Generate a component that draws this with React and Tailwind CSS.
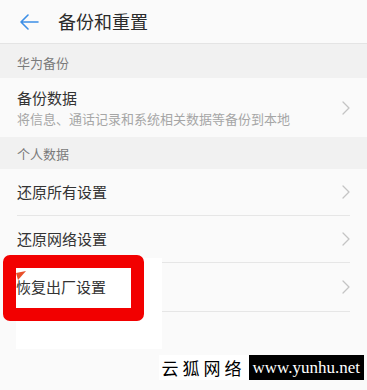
import React from "react";

const Chevron = () => (
  <svg width="8" height="14" viewBox="0 0 8 14" fill="none">
    <path d="M1 1 L7 7 L1 13" stroke="#c4c4c4" strokeWidth="1.3" strokeLinecap="round" strokeLinejoin="round" />
  </svg>
);

const SectionLabel = ({ children, h }) => (
  <div className={`${h} bg-[#f1f1f1] flex items-end px-[17px] pb-[6px] text-[13px] text-[#7a7a7a]`}>
    {children}
  </div>
);

const Row = ({ title, h, raised = false }) => (
  <div className={`${h} mx-[17px] flex items-center justify-between border-b border-[#e6e6e6]`}>
    <span className={`text-[15px] text-[#333] ${raised ? "relative z-10 -ml-[1px]" : ""}`}>{title}</span>
    <Chevron />
  </div>
);

const App = () => {
  return (
    <div
      className="relative w-full h-[390px] overflow-hidden bg-[#fafafa]"
      style={{ fontFamily: '"Noto Sans CJK SC", "Noto Sans", sans-serif' }}
    >
      <div className="h-[44px] flex items-center px-[19px] border-b border-[#e4e4e4] shadow-[0_1px_2px_rgba(0,0,0,0.06)]">
        <svg width="20" height="16" viewBox="0 0 20 16" fill="none">
          <path d="M19 8 H2 M9 1 L2 8 L9 15" stroke="#3d8fe6" strokeWidth="1.6" strokeLinecap="round" strokeLinejoin="round" />
        </svg>
        <span className="ml-[19px] text-[18px] text-[#2b2b2b]">备份和重置</span>
      </div>

      <SectionLabel h="h-[34px]">华为备份</SectionLabel>

      <div className="h-[59px] mx-[17px] flex items-center justify-between">
        <div className="flex flex-col">
          <span className="text-[15px] leading-[20px] text-[#333]">备份数据</span>
          <span className="mt-[2px] text-[13px] leading-[18px] text-[#a6a6a6]">将信息、通话记录和系统相关数据等备份到本地</span>
        </div>
        <Chevron />
      </div>

      <SectionLabel h="h-[32px]">个人数据</SectionLabel>

      <Row title="还原所有设置" h="h-[47px]" />
      <Row title="还原网络设置" h="h-[47px]" />
      <Row title="恢复出厂设置" h="h-[49px]" raised />

      {/* annotation overlay */}
      <div className="absolute left-[16px] top-[258px] w-[146px] h-[91px] bg-white" />
      <div className="absolute left-[3px] top-[255px] w-[141px] h-[66px] rounded-[7px] border-[13px] border-[#f20000] bg-white" />
      <svg className="absolute z-20 left-[16px] top-[271px]" width="10" height="9" viewBox="0 0 10 9">
        <path d="M0 2 L10 0 L2 9 Z" fill="#e8502a" />
      </svg>

      {/* watermark */}
      <div className="absolute right-[3px] top-[355px] flex items-stretch h-[25px]">
        <span className="bg-white px-[3px] flex items-center text-[17px] tracking-[4px] text-black">云狐网络</span>
        <span
          className="bg-black px-[4px] flex items-center text-[17px] text-white"
          style={{ fontFamily: '"Liberation Serif", serif' }}
        >
          www.yunhu.net
        </span>
      </div>
    </div>
  );
};

export default App;
